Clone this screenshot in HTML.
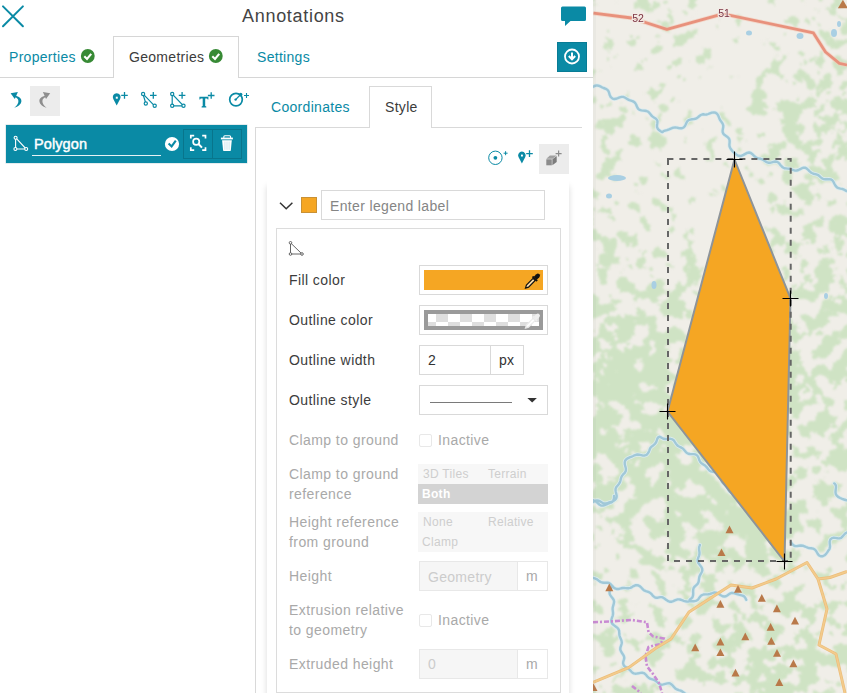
<!DOCTYPE html>
<html><head><meta charset="utf-8">
<style>
*{box-sizing:border-box;margin:0;padding:0}
html,body{width:847px;height:693px;overflow:hidden;background:#fff;font-family:"Liberation Sans",sans-serif;font-size:14px;color:#3c3c3c;letter-spacing:0.3px}
.a{position:absolute}
.teal{color:#0a8aa5}
.lbl{position:absolute;left:289px;font-size:14px;line-height:20px;color:#3c3c3c;letter-spacing:0.42px}
.dis{color:#a9a9a9}
.box{position:absolute;border:1px solid #d9d9d9;background:#fff}
.seg{font-size:12px;line-height:18px;color:#cecece;letter-spacing:0.3px}
</style></head><body>
<div id="panel" class="a" style="left:0;top:0;width:593px;height:693px;background:#fff">
  <div class="a" style="left:242px;top:5px;font-size:18px;line-height:22px;color:#444;letter-spacing:0.7px">Annotations</div>
  <!-- main tabs -->
  <div class="a" style="left:0;top:77px;width:593px;height:1px;background:#d6d6d6"></div>
  <div class="a" style="left:113px;top:36px;width:126px;height:42px;border:1px solid #d6d6d6;border-bottom:none;background:#fff"></div>
  <div class="a teal" style="left:9px;top:47px;line-height:20px">Properties</div>
  <div class="a" style="left:129px;top:47px;line-height:20px;color:#3c3c3c">Geometries</div>
  <div class="a teal" style="left:257px;top:47px;line-height:20px">Settings</div>
  <div class="a" style="left:557px;top:42px;width:30px;height:30px;background:#0a8aa5;border:1px solid #087c95"></div>
  <!-- toolbar -->
  <div class="a" style="left:30px;top:86px;width:30px;height:30px;background:#ececec"></div>
  <!-- polygon item bar -->
  <div class="a" style="left:6px;top:125px;width:241px;height:38px;background:#0a8aa5;box-shadow:0 0 0 0.5px #c9d9dd"></div>
  <div class="a" style="left:34px;top:134px;font-size:14.5px;line-height:20px;color:#fff;letter-spacing:0.1px;-webkit-text-stroke:0.45px #fff">Polygon</div>
  <div class="a" style="left:32px;top:155px;width:129px;height:1px;background:#e6f2f5"></div>
  <div class="a" style="left:183px;top:129px;width:30px;height:30px;border:1px solid #08758c"></div>
  <div class="a" style="left:212px;top:129px;width:30px;height:30px;border:1px solid #08758c"></div>

  <!-- sub panel -->
  <div class="a" style="left:255px;top:127px;width:327px;height:566px;border-left:1px solid #d9d9d9;border-top:1px solid #d9d9d9"></div>
  <div class="a" style="left:369px;top:86px;width:63px;height:42px;border:1px solid #d9d9d9;border-bottom:none;background:#fff"></div>
  <div class="a teal" style="left:271px;top:97px;line-height:20px">Coordinates</div>
  <div class="a" style="left:385px;top:97px;line-height:20px;color:#3c3c3c">Style</div>
  <div class="a" style="left:539px;top:144px;width:30px;height:30px;background:#ececec"></div>

  <!-- card -->
  <div class="a" style="left:267px;top:180px;width:302px;height:530px;background:#fff;box-shadow:0 6px 6px rgba(0,0,0,0.15)"></div>
  <div class="a" style="left:301px;top:197px;width:16px;height:16px;background:#f5a623;border:1px solid #c99135"></div>
  <div class="box" style="left:321px;top:190px;width:224px;height:30px"></div>
  <div class="a" style="left:330px;top:196px;line-height:20px;color:#858585;letter-spacing:0.35px">Enter legend label</div>
  <div class="box" style="left:276px;top:228px;width:285px;height:465px;border-color:#dcdcdc"></div>

  <div class="lbl" style="top:270px">Fill color</div>
  <div class="box" style="left:419px;top:265px;width:129px;height:30px"></div>
  <div class="a" style="left:424px;top:270px;width:119px;height:20px;background:#f5a623"></div>

  <div class="lbl" style="top:310px">Outline color</div>
  <div class="box" style="left:419px;top:305px;width:129px;height:30px"></div>
  <div class="a" style="left:424px;top:310px;width:119px;height:20px;border:4px solid #9a9a9a;background:#fff"></div>
  <div class="a" style="left:428px;top:314px;width:111px;height:8px;background:repeating-linear-gradient(90deg,#fff 0 8px,#dedede 8px 20px,#fff 20px 24px)"></div>
  <div class="a" style="left:428px;top:322px;width:111px;height:4px;background:repeating-linear-gradient(90deg,#dedede 0 8px,#fff 8px 20px,#dedede 20px 24px)"></div>

  <div class="lbl" style="top:350px">Outline width</div>
  <div class="box" style="left:419px;top:345px;width:72px;height:30px"></div>
  <div class="box" style="left:490px;top:345px;width:34px;height:30px"></div>
  <div class="a" style="left:428px;top:350px;line-height:20px;color:#333">2</div>
  <div class="a" style="left:499px;top:350px;line-height:20px;color:#333">px</div>

  <div class="lbl" style="top:390px">Outline style</div>
  <div class="box" style="left:419px;top:385px;width:129px;height:30px"></div>
  <div class="a" style="left:430px;top:402px;width:82px;height:1px;background:#7a7a7a"></div>

  <div class="lbl dis" style="top:430px">Clamp to ground</div>
  <div class="a" style="left:419px;top:434px;width:13px;height:13px;border:1px solid #e8e8e8;border-radius:2px"></div>
  <div class="a dis" style="left:438px;top:430px;line-height:20px;letter-spacing:0.4px">Inactive</div>

  <div class="lbl dis" style="top:464px">Clamp to ground<br>reference</div>
  <div class="a" style="left:418px;top:464px;width:130px;height:40px;background:#f7f7f7"></div>
  <div class="a" style="left:418px;top:484px;width:130px;height:20px;background:#d3d3d3"></div>
  <div class="a seg" style="left:423px;top:465px">3D Tiles</div>
  <div class="a seg" style="left:488px;top:465px">Terrain</div>
  <div class="a seg" style="left:422px;top:485px;color:#fff;font-weight:bold">Both</div>

  <div class="lbl dis" style="top:512px">Height reference<br>from ground</div>
  <div class="a" style="left:418px;top:512px;width:130px;height:40px;background:#f7f7f7"></div>
  <div class="a seg" style="left:423px;top:513px">None</div>
  <div class="a seg" style="left:488px;top:513px">Relative</div>
  <div class="a seg" style="left:422px;top:533px">Clamp</div>

  <div class="lbl dis" style="top:566px">Height</div>
  <div class="box" style="left:419px;top:561px;width:99px;height:30px;background:#f6f6f6;border-color:#e8e8e8"></div>
  <div class="box" style="left:517px;top:561px;width:31px;height:30px;border-color:#e8e8e8"></div>
  <div class="a" style="left:428px;top:567px;line-height:20px;color:#cccccc">Geometry</div>
  <div class="a dis" style="left:526px;top:566px;line-height:20px">m</div>

  <div class="lbl dis" style="top:600px">Extrusion relative<br>to geometry</div>
  <div class="a" style="left:419px;top:614px;width:13px;height:13px;border:1px solid #e8e8e8;border-radius:2px"></div>
  <div class="a dis" style="left:438px;top:610px;line-height:20px;letter-spacing:0.4px">Inactive</div>

  <div class="lbl dis" style="top:654px">Extruded height</div>
  <div class="box" style="left:419px;top:649px;width:99px;height:30px;background:#f6f6f6;border-color:#e8e8e8"></div>
  <div class="box" style="left:517px;top:649px;width:31px;height:30px;border-color:#e8e8e8"></div>
  <div class="a" style="left:428px;top:654px;line-height:20px;color:#cccccc">0</div>
  <div class="a dis" style="left:526px;top:654px;line-height:20px">m</div>

  <!-- ICON OVERLAY -->
  <svg class="a" style="left:0;top:0" width="593" height="693" viewBox="0 0 593 693">
    <!-- close -->
    <path d="M3 6.4L22.9 26.3M22.9 6.4L3 26.3" stroke="#0a8aa5" stroke-width="2" stroke-linecap="round" fill="none"/>
    <!-- chat -->
    <path d="M562.5 6.5H584.5Q586 6.5 586 8V19.5Q586 21 584.5 21H570.5L565 26V21H562.5Q561 21 561 19.5V8Q561 6.5 562.5 6.5Z" fill="#0a8aa5"/>
    <!-- tab checks -->
    <circle cx="87.8" cy="56" r="6.9" fill="#378a35"/><path d="M84.3 56.3L87 59L91.2 53.8" stroke="#fff" stroke-width="2.1" fill="none"/>
    <circle cx="215.8" cy="56" r="6.9" fill="#378a35"/><path d="M212.3 56.3L215 59L219.2 53.8" stroke="#fff" stroke-width="2.1" fill="none"/>
    <!-- download -->
    <circle cx="572" cy="56.5" r="7" stroke="#fff" stroke-width="1.8" fill="none"/><path d="M572 52.5V59M568.8 56L572 59.3L575.2 56" stroke="#fff" stroke-width="2" fill="none"/>
    <!-- undo -->
    <g fill="#0a8aa5"><path d="M10.6 93.3L17.9 92.1L14.8 98.9Z"/><path d="M15 95.6C19.3 96.5 21.6 98.6 21.4 101.2C21.1 104.2 18.2 106.6 14.2 107.7C16.9 105.6 18.5 103.2 18.4 100.9C18.3 98.9 16.9 97.6 14.4 97Z"/></g>
    <g fill="#8e8e8e"><path d="M50.2 93.3L42.9 92.1L46 98.9Z"/><path d="M45.8 95.6C41.5 96.5 39.2 98.6 39.4 101.2C39.7 104.2 42.6 106.6 46.6 107.7C43.9 105.6 42.3 103.2 42.4 100.9C42.5 98.9 43.9 97.6 46.4 97Z"/></g>
    <!-- point plus -->
    <path d="M116.7 105.5L113.3 99A3.9 3.9 0 1 1 120.1 99Z" fill="#0a8aa5"/><rect x="115.8" y="96.7" width="2" height="2" fill="#fff"/>
    <path d="M121.2 95.4H127.8M124.5 92.1V98.7" stroke="#0a8aa5" stroke-width="1.3"/>
    <!-- line plus -->
    <g stroke="#0a8aa5" stroke-width="1.2" fill="#fff">
      <path d="M143.4 95.5L145.4 102M144.2 95.2L153.6 104.8" fill="none"/>
      <circle cx="143.1" cy="94" r="1.6"/><circle cx="145.8" cy="103.5" r="1.6"/><circle cx="154.7" cy="105.8" r="1.6"/>
    </g>
    <path d="M150 95.4H156.6M153.3 92.1V98.7" stroke="#0a8aa5" stroke-width="1.3"/>
    <!-- polygon plus -->
    <g stroke="#0a8aa5" stroke-width="1.2" fill="#fff">
      <path d="M172.2 94V105.8H183.5Z" fill="none"/>
      <circle cx="172.2" cy="94" r="1.6"/><circle cx="172.2" cy="105.8" r="1.6"/><circle cx="183.5" cy="105.8" r="1.6"/>
    </g>
    <path d="M178.8 95.4H185.4M182.1 92.1V98.7" stroke="#0a8aa5" stroke-width="1.3"/>
    <!-- T plus -->
    <path d="M199.4 96.8H208.4V99.6H207.7L207.1 98.6H205.2V106.1L206.3 106.5V107.4H201.6V106.5L202.7 106.1V98.6H200.7L200.1 99.6H199.4Z" fill="#0a8aa5"/>
    <path d="M207.9 95.5H214.5M211.2 92.2V98.8" stroke="#0a8aa5" stroke-width="1.3"/>
    <!-- circle plus -->
    <circle cx="236" cy="99.6" r="6.3" fill="none" stroke="#0a8aa5" stroke-width="1.7"/>
    <path d="M235.6 99.6L240.7 94.5" stroke="#0a8aa5" stroke-width="1.3"/><circle cx="235.6" cy="99.6" r="1.2" fill="#0a8aa5"/><circle cx="240.7" cy="94.5" r="1.7" fill="#0a8aa5"/>
    <path d="M244 95.5H249M246.5 93V98" stroke="#0a8aa5" stroke-width="1.1"/>
    <!-- bar polygon icon -->
    <g stroke="#fff" stroke-width="1.1" fill="#0a8aa5">
      <path d="M15.6 137.7V149H26.2Z" fill="none"/>
      <circle cx="15.6" cy="137.7" r="1.5"/><circle cx="15.4" cy="149" r="1.5"/><circle cx="26.2" cy="149" r="1.5"/>
    </g>
    <!-- bar check -->
    <circle cx="172" cy="144" r="7.1" fill="#fff"/><path d="M168.6 143.6L171.6 146.4L175.8 140.6" stroke="#0a8aa5" stroke-width="2.1" fill="none"/>
    <!-- zoom -->
    <path d="M190.8 138.6V135.7H194.2M202.2 135.7H205.5V138.6M205.5 147.2V150.1H202.2M194.2 150.1H190.8V147.2" stroke="#fff" stroke-width="1.7" fill="none"/>
    <circle cx="196.2" cy="141.8" r="3.1" stroke="#fff" stroke-width="1.7" fill="none"/><path d="M198.4 144L202 147.6" stroke="#fff" stroke-width="2"/>
    <!-- trash -->
    <path d="M223.8 138.2V136.8Q223.8 135.8 224.8 135.8H229.6Q230.6 135.8 230.6 136.8V138.2" stroke="#fff" stroke-width="1.1" fill="none"/>
    <rect x="220.9" y="137.6" width="12" height="1.8" fill="#fff"/>
    <path d="M222.1 140.3H231.8L230.8 150.6Q230.7 151 230.2 151H223.7Q223.2 151 223.1 150.6Z" fill="#fff"/>
    <path d="M224.9 141.5V149.8M227 141.5V149.8M229.1 141.5V149.8" stroke="#b9dde6" stroke-width="0.7"/>
    <!-- style icons -->
    <circle cx="495.4" cy="157.8" r="6.7" fill="none" stroke="#0a8aa5" stroke-width="1"/><circle cx="495.4" cy="157.8" r="1.9" fill="#0a8aa5"/>
    <path d="M503.6 153.2H507.6M505.6 151.2V155.2" stroke="#0a8aa5" stroke-width="1"/>
    <path d="M521.9 163.4L518.5 157.1A3.8 3.8 0 1 1 525.3 157.1Z" fill="#0a8aa5"/><rect x="521" y="154.6" width="1.9" height="1.9" fill="#fff"/>
    <path d="M526.2 153.6H532.8M529.5 150.3V156.9" stroke="#0a8aa5" stroke-width="1.3"/>
    <g fill="#8c8c8c">
      <path d="M546.3 159.3H551.8V165.3H546.3Z"/>
      <path d="M546.3 158.7L549.9 155.4H556.6L552.6 158.7Z" fill="#a0a0a0"/>
      <path d="M552.4 159.3L556.7 155.9V162L552.4 165.3Z" fill="#7c7c7c"/>
    </g>
    <path d="M555.6 153.6H561.6M558.6 150.6V156.6" stroke="#8c8c8c" stroke-width="1.2"/>
    <!-- chevron -->
    <path d="M280 202.7L286.2 208.7L292.4 202.7" stroke="#333" stroke-width="1.5" fill="none"/>
    <!-- small polygon icon -->
    <g stroke="#555" stroke-width="0.9" fill="#fff">
      <path d="M290.5 242.8V254H302Z" fill="none"/>
      <circle cx="290.5" cy="242.8" r="1.3"/><circle cx="290.5" cy="254" r="1.3"/><circle cx="302" cy="254" r="1.3"/>
    </g>
    <!-- eyedropper -->
    <g transform="translate(532.3,281.3) rotate(45)">
      <path d="M-2.1 -4.2V-7.8Q-2.1 -10 0 -10Q2.1 -10 2.1 -7.8V-4.2Z" fill="#111"/>
      <rect x="-3.3" y="-4.6" width="6.6" height="2" rx="0.6" fill="#111"/>
      <path d="M-1.5 -2.6V6.8L0 9.6L1.5 6.8V-2.6Z" fill="#f9dcaa" stroke="#111" stroke-width="1.2"/>
    </g>
    <g transform="translate(532.3,321.3) rotate(45)" opacity="0.95">
      <path d="M-2.1 -4.2V-7.8Q-2.1 -10 0 -10Q2.1 -10 2.1 -7.8V-4.2Z" fill="#f0f0f0"/>
      <rect x="-3.3" y="-4.6" width="6.6" height="2" rx="0.6" fill="#f0f0f0"/>
      <path d="M-1.5 -2.6V6.8L0 9.6L1.5 6.8V-2.6Z" fill="#fff" stroke="#ececec" stroke-width="1.2"/>
    </g>
    <!-- select caret -->
    <path d="M527.4 397.9H536.9L532.15 402.6Z" fill="#333"/>
  </svg>
</div>

<!-- MAP -->
<svg class="a" style="left:593px;top:0" width="254" height="693" viewBox="593 0 254 693">
<defs>
<filter id="tex" x="560" y="-40" width="330" height="780" filterUnits="userSpaceOnUse" color-interpolation-filters="sRGB">
  <feGaussianBlur in="SourceGraphic" stdDeviation="12" result="d"/>
  <feTurbulence type="fractalNoise" baseFrequency="0.06" numOctaves="4" seed="7" result="n"/>
  <feColorMatrix in="n" type="matrix" values="0 0 0 0 0  0 0 0 0 0  0 0 0 0 0  1 0 0 0 0" result="na"/>
  <feComposite in="d" in2="na" operator="arithmetic" k1="0" k2="2.4" k3="3" k4="-2.75" result="s"/>
  <feComponentTransfer in="s" result="t"><feFuncA type="linear" slope="12" intercept="-0.5"/></feComponentTransfer>
  <feFlood flood-color="#cfe3c4" result="c"/>
  <feComposite in="c" in2="t" operator="in" result="g"/>
  <feGaussianBlur in="g" stdDeviation="0.9"/>
</filter>
<filter id="wig" x="560" y="-40" width="330" height="780" filterUnits="userSpaceOnUse">
  <feTurbulence type="fractalNoise" baseFrequency="0.045" numOctaves="2" seed="5" result="w"/>
  <feDisplacementMap in="SourceGraphic" in2="w" scale="14" xChannelSelector="R" yChannelSelector="G" result="dm"/>
  <feGaussianBlur in="dm" stdDeviation="0.5"/>
</filter>
<filter id="soft" x="560" y="-40" width="330" height="780" filterUnits="userSpaceOnUse"><feGaussianBlur stdDeviation="0.55"/></filter>
</defs>
<g filter="url(#soft)">
<rect x="593" y="0" width="254" height="693" fill="#f0eee8"/>
<g filter="url(#tex)">
<rect x="561" y="-32" width="33" height="33" fill-opacity="0.35"/>
<rect x="593" y="-32" width="33" height="33" fill-opacity="0.35"/>
<rect x="625" y="-32" width="33" height="33" fill-opacity="0.38"/>
<rect x="657" y="-32" width="33" height="33" fill-opacity="0.48"/>
<rect x="689" y="-32" width="33" height="33" fill-opacity="0.3"/>
<rect x="721" y="-32" width="33" height="33" fill-opacity="0.3"/>
<rect x="753" y="-32" width="33" height="33" fill-opacity="0.32"/>
<rect x="785" y="-32" width="33" height="33" fill-opacity="0.42"/>
<rect x="817" y="-32" width="33" height="33" fill-opacity="0.5"/>
<rect x="849" y="-32" width="33" height="33" fill-opacity="0.5"/>
<rect x="561" y="0" width="33" height="33" fill-opacity="0.35"/>
<rect x="593" y="0" width="33" height="33" fill-opacity="0.35"/>
<rect x="625" y="0" width="33" height="33" fill-opacity="0.38"/>
<rect x="657" y="0" width="33" height="33" fill-opacity="0.48"/>
<rect x="689" y="0" width="33" height="33" fill-opacity="0.3"/>
<rect x="721" y="0" width="33" height="33" fill-opacity="0.3"/>
<rect x="753" y="0" width="33" height="33" fill-opacity="0.32"/>
<rect x="785" y="0" width="33" height="33" fill-opacity="0.42"/>
<rect x="817" y="0" width="33" height="33" fill-opacity="0.5"/>
<rect x="849" y="0" width="33" height="33" fill-opacity="0.5"/>
<rect x="561" y="32" width="33" height="33" fill-opacity="0.3"/>
<rect x="593" y="32" width="33" height="33" fill-opacity="0.3"/>
<rect x="625" y="32" width="33" height="33" fill-opacity="0.35"/>
<rect x="657" y="32" width="33" height="33" fill-opacity="0.42"/>
<rect x="689" y="32" width="33" height="33" fill-opacity="0.42"/>
<rect x="721" y="32" width="33" height="33" fill-opacity="0.28"/>
<rect x="753" y="32" width="33" height="33" fill-opacity="0.33"/>
<rect x="785" y="32" width="33" height="33" fill-opacity="0.38"/>
<rect x="817" y="32" width="33" height="33" fill-opacity="0.45"/>
<rect x="849" y="32" width="33" height="33" fill-opacity="0.45"/>
<rect x="561" y="64" width="33" height="33" fill-opacity="0.33"/>
<rect x="593" y="64" width="33" height="33" fill-opacity="0.33"/>
<rect x="625" y="64" width="33" height="33" fill-opacity="0.28"/>
<rect x="657" y="64" width="33" height="33" fill-opacity="0.4"/>
<rect x="689" y="64" width="33" height="33" fill-opacity="0.28"/>
<rect x="721" y="64" width="33" height="33" fill-opacity="0.22"/>
<rect x="753" y="64" width="33" height="33" fill-opacity="0.42"/>
<rect x="785" y="64" width="33" height="33" fill-opacity="0.5"/>
<rect x="817" y="64" width="33" height="33" fill-opacity="0.52"/>
<rect x="849" y="64" width="33" height="33" fill-opacity="0.52"/>
<rect x="561" y="96" width="33" height="33" fill-opacity="0.42"/>
<rect x="593" y="96" width="33" height="33" fill-opacity="0.42"/>
<rect x="625" y="96" width="33" height="33" fill-opacity="0.42"/>
<rect x="657" y="96" width="33" height="33" fill-opacity="0.36"/>
<rect x="689" y="96" width="33" height="33" fill-opacity="0.28"/>
<rect x="721" y="96" width="33" height="33" fill-opacity="0.28"/>
<rect x="753" y="96" width="33" height="33" fill-opacity="0.5"/>
<rect x="785" y="96" width="33" height="33" fill-opacity="0.55"/>
<rect x="817" y="96" width="33" height="33" fill-opacity="0.55"/>
<rect x="849" y="96" width="33" height="33" fill-opacity="0.55"/>
<rect x="561" y="128" width="33" height="33" fill-opacity="0.42"/>
<rect x="593" y="128" width="33" height="33" fill-opacity="0.42"/>
<rect x="625" y="128" width="33" height="33" fill-opacity="0.42"/>
<rect x="657" y="128" width="33" height="33" fill-opacity="0.28"/>
<rect x="689" y="128" width="33" height="33" fill-opacity="0.3"/>
<rect x="721" y="128" width="33" height="33" fill-opacity="0.28"/>
<rect x="753" y="128" width="33" height="33" fill-opacity="0.5"/>
<rect x="785" y="128" width="33" height="33" fill-opacity="0.55"/>
<rect x="817" y="128" width="33" height="33" fill-opacity="0.52"/>
<rect x="849" y="128" width="33" height="33" fill-opacity="0.52"/>
<rect x="561" y="160" width="33" height="33" fill-opacity="0.42"/>
<rect x="593" y="160" width="33" height="33" fill-opacity="0.42"/>
<rect x="625" y="160" width="33" height="33" fill-opacity="0.32"/>
<rect x="657" y="160" width="33" height="33" fill-opacity="0.28"/>
<rect x="689" y="160" width="33" height="33" fill-opacity="0.3"/>
<rect x="721" y="160" width="33" height="33" fill-opacity="0.3"/>
<rect x="753" y="160" width="33" height="33" fill-opacity="0.42"/>
<rect x="785" y="160" width="33" height="33" fill-opacity="0.5"/>
<rect x="817" y="160" width="33" height="33" fill-opacity="0.48"/>
<rect x="849" y="160" width="33" height="33" fill-opacity="0.48"/>
<rect x="561" y="192" width="33" height="33" fill-opacity="0.45"/>
<rect x="593" y="192" width="33" height="33" fill-opacity="0.45"/>
<rect x="625" y="192" width="33" height="33" fill-opacity="0.38"/>
<rect x="657" y="192" width="33" height="33" fill-opacity="0.32"/>
<rect x="689" y="192" width="33" height="33" fill-opacity="0.32"/>
<rect x="721" y="192" width="33" height="33" fill-opacity="0.35"/>
<rect x="753" y="192" width="33" height="33" fill-opacity="0.4"/>
<rect x="785" y="192" width="33" height="33" fill-opacity="0.45"/>
<rect x="817" y="192" width="33" height="33" fill-opacity="0.5"/>
<rect x="849" y="192" width="33" height="33" fill-opacity="0.5"/>
<rect x="561" y="224" width="33" height="33" fill-opacity="0.48"/>
<rect x="593" y="224" width="33" height="33" fill-opacity="0.48"/>
<rect x="625" y="224" width="33" height="33" fill-opacity="0.42"/>
<rect x="657" y="224" width="33" height="33" fill-opacity="0.42"/>
<rect x="689" y="224" width="33" height="33" fill-opacity="0.38"/>
<rect x="721" y="224" width="33" height="33" fill-opacity="0.4"/>
<rect x="753" y="224" width="33" height="33" fill-opacity="0.42"/>
<rect x="785" y="224" width="33" height="33" fill-opacity="0.45"/>
<rect x="817" y="224" width="33" height="33" fill-opacity="0.5"/>
<rect x="849" y="224" width="33" height="33" fill-opacity="0.5"/>
<rect x="561" y="256" width="33" height="33" fill-opacity="0.5"/>
<rect x="593" y="256" width="33" height="33" fill-opacity="0.5"/>
<rect x="625" y="256" width="33" height="33" fill-opacity="0.48"/>
<rect x="657" y="256" width="33" height="33" fill-opacity="0.45"/>
<rect x="689" y="256" width="33" height="33" fill-opacity="0.4"/>
<rect x="721" y="256" width="33" height="33" fill-opacity="0.4"/>
<rect x="753" y="256" width="33" height="33" fill-opacity="0.4"/>
<rect x="785" y="256" width="33" height="33" fill-opacity="0.5"/>
<rect x="817" y="256" width="33" height="33" fill-opacity="0.52"/>
<rect x="849" y="256" width="33" height="33" fill-opacity="0.52"/>
<rect x="561" y="288" width="33" height="33" fill-opacity="0.52"/>
<rect x="593" y="288" width="33" height="33" fill-opacity="0.52"/>
<rect x="625" y="288" width="33" height="33" fill-opacity="0.52"/>
<rect x="657" y="288" width="33" height="33" fill-opacity="0.5"/>
<rect x="689" y="288" width="33" height="33" fill-opacity="0.5"/>
<rect x="721" y="288" width="33" height="33" fill-opacity="0.5"/>
<rect x="753" y="288" width="33" height="33" fill-opacity="0.5"/>
<rect x="785" y="288" width="33" height="33" fill-opacity="0.5"/>
<rect x="817" y="288" width="33" height="33" fill-opacity="0.55"/>
<rect x="849" y="288" width="33" height="33" fill-opacity="0.55"/>
<rect x="561" y="320" width="33" height="33" fill-opacity="0.58"/>
<rect x="593" y="320" width="33" height="33" fill-opacity="0.58"/>
<rect x="625" y="320" width="33" height="33" fill-opacity="0.58"/>
<rect x="657" y="320" width="33" height="33" fill-opacity="0.62"/>
<rect x="689" y="320" width="33" height="33" fill-opacity="0.5"/>
<rect x="721" y="320" width="33" height="33" fill-opacity="0.5"/>
<rect x="753" y="320" width="33" height="33" fill-opacity="0.5"/>
<rect x="785" y="320" width="33" height="33" fill-opacity="0.52"/>
<rect x="817" y="320" width="33" height="33" fill-opacity="0.58"/>
<rect x="849" y="320" width="33" height="33" fill-opacity="0.58"/>
<rect x="561" y="352" width="33" height="33" fill-opacity="0.68"/>
<rect x="593" y="352" width="33" height="33" fill-opacity="0.68"/>
<rect x="625" y="352" width="33" height="33" fill-opacity="0.68"/>
<rect x="657" y="352" width="33" height="33" fill-opacity="0.65"/>
<rect x="689" y="352" width="33" height="33" fill-opacity="0.5"/>
<rect x="721" y="352" width="33" height="33" fill-opacity="0.5"/>
<rect x="753" y="352" width="33" height="33" fill-opacity="0.5"/>
<rect x="785" y="352" width="33" height="33" fill-opacity="0.56"/>
<rect x="817" y="352" width="33" height="33" fill-opacity="0.55"/>
<rect x="849" y="352" width="33" height="33" fill-opacity="0.55"/>
<rect x="561" y="384" width="33" height="33" fill-opacity="0.66"/>
<rect x="593" y="384" width="33" height="33" fill-opacity="0.66"/>
<rect x="625" y="384" width="33" height="33" fill-opacity="0.68"/>
<rect x="657" y="384" width="33" height="33" fill-opacity="0.64"/>
<rect x="689" y="384" width="33" height="33" fill-opacity="0.5"/>
<rect x="721" y="384" width="33" height="33" fill-opacity="0.5"/>
<rect x="753" y="384" width="33" height="33" fill-opacity="0.5"/>
<rect x="785" y="384" width="33" height="33" fill-opacity="0.55"/>
<rect x="817" y="384" width="33" height="33" fill-opacity="0.55"/>
<rect x="849" y="384" width="33" height="33" fill-opacity="0.55"/>
<rect x="561" y="416" width="33" height="33" fill-opacity="0.62"/>
<rect x="593" y="416" width="33" height="33" fill-opacity="0.62"/>
<rect x="625" y="416" width="33" height="33" fill-opacity="0.66"/>
<rect x="657" y="416" width="33" height="33" fill-opacity="0.6"/>
<rect x="689" y="416" width="33" height="33" fill-opacity="0.5"/>
<rect x="721" y="416" width="33" height="33" fill-opacity="0.5"/>
<rect x="753" y="416" width="33" height="33" fill-opacity="0.5"/>
<rect x="785" y="416" width="33" height="33" fill-opacity="0.52"/>
<rect x="817" y="416" width="33" height="33" fill-opacity="0.55"/>
<rect x="849" y="416" width="33" height="33" fill-opacity="0.55"/>
<rect x="561" y="448" width="33" height="33" fill-opacity="0.6"/>
<rect x="593" y="448" width="33" height="33" fill-opacity="0.6"/>
<rect x="625" y="448" width="33" height="33" fill-opacity="0.64"/>
<rect x="657" y="448" width="33" height="33" fill-opacity="0.66"/>
<rect x="689" y="448" width="33" height="33" fill-opacity="0.58"/>
<rect x="721" y="448" width="33" height="33" fill-opacity="0.5"/>
<rect x="753" y="448" width="33" height="33" fill-opacity="0.5"/>
<rect x="785" y="448" width="33" height="33" fill-opacity="0.5"/>
<rect x="817" y="448" width="33" height="33" fill-opacity="0.52"/>
<rect x="849" y="448" width="33" height="33" fill-opacity="0.52"/>
<rect x="561" y="480" width="33" height="33" fill-opacity="0.55"/>
<rect x="593" y="480" width="33" height="33" fill-opacity="0.55"/>
<rect x="625" y="480" width="33" height="33" fill-opacity="0.62"/>
<rect x="657" y="480" width="33" height="33" fill-opacity="0.66"/>
<rect x="689" y="480" width="33" height="33" fill-opacity="0.66"/>
<rect x="721" y="480" width="33" height="33" fill-opacity="0.62"/>
<rect x="753" y="480" width="33" height="33" fill-opacity="0.5"/>
<rect x="785" y="480" width="33" height="33" fill-opacity="0.48"/>
<rect x="817" y="480" width="33" height="33" fill-opacity="0.5"/>
<rect x="849" y="480" width="33" height="33" fill-opacity="0.5"/>
<rect x="561" y="512" width="33" height="33" fill-opacity="0.45"/>
<rect x="593" y="512" width="33" height="33" fill-opacity="0.45"/>
<rect x="625" y="512" width="33" height="33" fill-opacity="0.52"/>
<rect x="657" y="512" width="33" height="33" fill-opacity="0.64"/>
<rect x="689" y="512" width="33" height="33" fill-opacity="0.68"/>
<rect x="721" y="512" width="33" height="33" fill-opacity="0.68"/>
<rect x="753" y="512" width="33" height="33" fill-opacity="0.62"/>
<rect x="785" y="512" width="33" height="33" fill-opacity="0.5"/>
<rect x="817" y="512" width="33" height="33" fill-opacity="0.45"/>
<rect x="849" y="512" width="33" height="33" fill-opacity="0.45"/>
<rect x="561" y="544" width="33" height="33" fill-opacity="0.38"/>
<rect x="593" y="544" width="33" height="33" fill-opacity="0.38"/>
<rect x="625" y="544" width="33" height="33" fill-opacity="0.45"/>
<rect x="657" y="544" width="33" height="33" fill-opacity="0.55"/>
<rect x="689" y="544" width="33" height="33" fill-opacity="0.6"/>
<rect x="721" y="544" width="33" height="33" fill-opacity="0.6"/>
<rect x="753" y="544" width="33" height="33" fill-opacity="0.56"/>
<rect x="785" y="544" width="33" height="33" fill-opacity="0.42"/>
<rect x="817" y="544" width="33" height="33" fill-opacity="0.4"/>
<rect x="849" y="544" width="33" height="33" fill-opacity="0.4"/>
<rect x="561" y="576" width="33" height="33" fill-opacity="0.38"/>
<rect x="593" y="576" width="33" height="33" fill-opacity="0.38"/>
<rect x="625" y="576" width="33" height="33" fill-opacity="0.42"/>
<rect x="657" y="576" width="33" height="33" fill-opacity="0.42"/>
<rect x="689" y="576" width="33" height="33" fill-opacity="0.46"/>
<rect x="721" y="576" width="33" height="33" fill-opacity="0.42"/>
<rect x="753" y="576" width="33" height="33" fill-opacity="0.46"/>
<rect x="785" y="576" width="33" height="33" fill-opacity="0.4"/>
<rect x="817" y="576" width="33" height="33" fill-opacity="0.4"/>
<rect x="849" y="576" width="33" height="33" fill-opacity="0.4"/>
<rect x="561" y="608" width="33" height="33" fill-opacity="0.48"/>
<rect x="593" y="608" width="33" height="33" fill-opacity="0.48"/>
<rect x="625" y="608" width="33" height="33" fill-opacity="0.46"/>
<rect x="657" y="608" width="33" height="33" fill-opacity="0.42"/>
<rect x="689" y="608" width="33" height="33" fill-opacity="0.46"/>
<rect x="721" y="608" width="33" height="33" fill-opacity="0.5"/>
<rect x="753" y="608" width="33" height="33" fill-opacity="0.56"/>
<rect x="785" y="608" width="33" height="33" fill-opacity="0.52"/>
<rect x="817" y="608" width="33" height="33" fill-opacity="0.5"/>
<rect x="849" y="608" width="33" height="33" fill-opacity="0.5"/>
<rect x="561" y="640" width="33" height="33" fill-opacity="0.48"/>
<rect x="593" y="640" width="33" height="33" fill-opacity="0.48"/>
<rect x="625" y="640" width="33" height="33" fill-opacity="0.42"/>
<rect x="657" y="640" width="33" height="33" fill-opacity="0.46"/>
<rect x="689" y="640" width="33" height="33" fill-opacity="0.52"/>
<rect x="721" y="640" width="33" height="33" fill-opacity="0.6"/>
<rect x="753" y="640" width="33" height="33" fill-opacity="0.62"/>
<rect x="785" y="640" width="33" height="33" fill-opacity="0.58"/>
<rect x="817" y="640" width="33" height="33" fill-opacity="0.55"/>
<rect x="849" y="640" width="33" height="33" fill-opacity="0.55"/>
<rect x="561" y="672" width="33" height="33" fill-opacity="0.48"/>
<rect x="593" y="672" width="33" height="33" fill-opacity="0.48"/>
<rect x="625" y="672" width="33" height="33" fill-opacity="0.42"/>
<rect x="657" y="672" width="33" height="33" fill-opacity="0.42"/>
<rect x="689" y="672" width="33" height="33" fill-opacity="0.48"/>
<rect x="721" y="672" width="33" height="33" fill-opacity="0.56"/>
<rect x="753" y="672" width="33" height="33" fill-opacity="0.62"/>
<rect x="785" y="672" width="33" height="33" fill-opacity="0.55"/>
<rect x="817" y="672" width="33" height="33" fill-opacity="0.55"/>
<rect x="849" y="672" width="33" height="33" fill-opacity="0.55"/>
<rect x="561" y="704" width="33" height="33" fill-opacity="0.48"/>
<rect x="593" y="704" width="33" height="33" fill-opacity="0.48"/>
<rect x="625" y="704" width="33" height="33" fill-opacity="0.42"/>
<rect x="657" y="704" width="33" height="33" fill-opacity="0.42"/>
<rect x="689" y="704" width="33" height="33" fill-opacity="0.48"/>
<rect x="721" y="704" width="33" height="33" fill-opacity="0.56"/>
<rect x="753" y="704" width="33" height="33" fill-opacity="0.62"/>
<rect x="785" y="704" width="33" height="33" fill-opacity="0.55"/>
<rect x="817" y="704" width="33" height="33" fill-opacity="0.55"/>
<rect x="849" y="704" width="33" height="33" fill-opacity="0.55"/>
</g>
<g fill="#a9cfe3">
  <ellipse cx="617" cy="178" rx="9" ry="3"/><ellipse cx="609" cy="196" rx="3" ry="2.5"/>
  <ellipse cx="749" cy="33" rx="3" ry="2.5"/><ellipse cx="800" cy="36" rx="3.5" ry="3"/><ellipse cx="834" cy="33" rx="3" ry="4"/><ellipse cx="839" cy="24" rx="2" ry="3"/>
  <ellipse cx="654" cy="285" rx="2.5" ry="4"/><ellipse cx="826" cy="296" rx="2" ry="3"/>
</g>
<g fill="none" stroke-linejoin="round" stroke-linecap="round">
  <path stroke="#dcecef" stroke-width="4" d="M593.0 86.8 L594.0 86.3 L595.3 85.7 L596.8 85.4 L598.5 85.7 L600.3 86.4 L602.0 87.3 L603.6 88.0 L605.0 88.5 L606.4 89.1 L607.7 90.1 L608.6 91.4 L609.2 93.1 L609.7 95.0 L610.8 97.1 L612.6 98.6 L614.2 99.0 L615.9 98.8 L617.8 98.2 L619.7 97.4 L621.5 96.9 L623.2 96.9 L624.8 97.5 L626.4 98.5 L627.9 99.4 L629.4 100.1 L631.0 100.6 L632.5 101.1 L634.0 101.9 L635.2 103.0 L636.1 104.5 L636.8 106.2 L637.5 107.8 L638.4 109.1 L639.7 109.9 L641.4 110.4 L643.2 110.6 L645.0 110.7 L646.5 111.0 L648.0 111.6 L649.2 112.7 L650.3 114.1 L651.4 115.5 L652.7 116.6 L653.9 117.5 L655.2 118.2 L656.3 119.1 L657.2 120.3 L657.5 121.7 L657.3 123.4 L657.0 125.3 L657.0 127.1 L657.8 128.8 L659.3 130.3 L661.0 131.5 L662.3 132.1 L662.8 131.9 L663.0 131.5 L663.5 131.2 L665.0 130.7 L667.0 130.2 L669.0 129.4 L670.8 128.6 L672.2 128.0 L673.6 127.6 L675.2 127.4 L676.8 127.6 L678.5 128.0 L680.3 128.3 L682.0 128.3 L683.6 127.5 L684.8 126.2 L685.7 124.5 L686.5 122.7 L687.4 121.2 L688.6 120.1 L690.2 119.6 L692.0 119.3 L693.7 119.1 L695.3 118.8 L696.9 118.1 L698.3 117.0 L699.5 115.9 L700.8 115.0 L702.1 114.5 L703.4 114.3 L704.5 114.5 L705.7 114.6 L706.9 114.5 L708.2 114.0 L709.8 113.3 L711.8 112.6 L713.9 112.4 L715.6 112.7 L717.0 113.7 L718.0 115.1 L718.8 116.9 L719.4 118.7 L720.3 120.3 L721.2 121.6 L722.2 122.9 L722.9 124.2 L723.3 125.7 L723.2 127.3 L722.9 128.9 L722.6 130.6 L722.7 132.2 L723.4 133.8 L724.7 135.1 L726.4 136.2 L728.0 137.4 L729.1 138.8 L729.6 140.5 L729.6 142.4 L729.4 144.4 L729.5 146.2 L730.0 147.7 L731.0 149.3 L732.1 150.7 L733.2 151.9 L734.6 153.1 L736.3 154.5 L737.5 155.3 L738.8 155.8 L740.3 156.0 L741.8 155.7 L743.5 154.9 L745.3 153.9 L747.1 152.9 L749.0 152.5 L750.8 153.0 L752.5 154.2 L753.6 155.4 L754.8 156.5 L756.1 157.5 L757.5 158.1 L759.1 158.5 L760.7 158.8 L762.3 159.4 L763.8 160.2 L765.2 161.2 L766.7 162.1 L768.2 162.7 L769.9 162.7 L771.6 162.4 L773.4 161.9 L775.2 161.5 L776.8 161.7 L778.2 162.5 L779.4 163.7 L780.6 165.2 L781.8 166.5 L783.0 167.5 L784.4 168.2 L785.9 168.4 L787.5 168.6 L789.1 168.7 L790.7 169.2 L792.1 169.7 L793.6 170.2 L795.1 170.6 L796.7 170.5 L798.4 170.0 L800.2 169.1 L802.0 168.2 L803.7 167.7 L805.4 167.8 L806.8 168.6 L808.2 169.8 L809.4 171.1 L810.6 172.2 L811.8 173.0 L813.3 173.7 L814.8 174.0 L816.3 174.4 L817.7 174.9 L818.9 175.6 L820.0 176.6 L821.1 177.6 L822.3 178.5 L823.7 179.1 L825.4 179.3 L827.4 179.2 L829.1 179.1 L830.8 179.4 L832.3 180.3 L833.5 181.9 L834.5 184.0 L835.6 185.9 L837.0 187.4 L838.6 188.2 L840.4 188.6 L842.0 188.9 L843.5 189.4 L844.7 190.0 L845.7 190.6 L846.5 191.1 M593.0 502.0 L594.0 501.4 L595.4 500.8 L597.0 500.5 L598.5 500.6 L600.0 501.3 L601.5 502.3 L603.1 503.1 L604.8 503.5 L606.4 503.4 L607.9 503.0 L609.3 502.5 L611.0 502.0 L612.1 501.5 L613.4 500.9 L614.7 500.1 L615.8 499.0 L616.5 497.6 L616.7 495.9 L616.3 494.0 L615.8 492.0 L615.5 490.0 L615.7 488.3 L616.6 486.7 L617.9 485.2 L619.1 483.7 L620.0 482.2 L620.5 480.5 L620.8 478.9 L621.3 477.3 L622.0 475.9 L622.9 474.7 L623.9 473.7 L624.8 472.8 L625.8 470.9 L625.9 468.8 L625.4 466.6 L624.8 464.5 L624.7 462.6 L625.0 461.0 L625.9 459.7 L627.1 458.6 L628.6 457.9 L630.2 457.2 L631.7 456.6 L633.1 456.0 L634.5 455.3 L636.0 454.8 L637.6 454.5 L639.4 454.7 L641.2 455.1 L643.1 455.6 L644.8 455.5 L646.5 454.8 L647.8 453.5 L648.8 451.9 L649.4 450.3 L649.9 448.8 L650.6 447.6 L651.9 446.4 L653.5 445.2 L655.0 443.8 L656.1 442.3 L656.7 440.6 L657.2 439.1 L657.8 437.9 L658.5 437.1 L659.3 436.8 L660.3 436.9 L661.1 437.4 L662.0 438.0 L663.3 438.7 L665.3 439.0 L667.8 438.9 L670.3 438.8 L672.5 439.4 L673.4 440.0 L674.3 441.1 L675.1 442.4 L676.0 443.7 L677.0 445.0 L678.1 446.0 L679.5 446.7 L680.9 447.4 L682.3 448.2 L683.5 449.2 L684.6 450.5 L685.7 451.8 L686.9 453.0 L688.3 453.7 L690.0 454.0 L692.0 454.1 L693.7 454.1 L695.3 454.4 L696.6 455.0 L697.6 456.0 L698.4 457.4 L699.0 459.0 L699.5 460.5 L700.3 461.9 L701.2 463.0 L702.4 463.9 L703.8 464.7 L705.1 465.6 L706.2 466.6 L707.3 467.9 L708.3 469.3 L709.4 470.5 L711.0 471.4 L713.1 471.9 L714.8 472.1 L716.6 472.4 L718.2 473.0 L719.5 474.0 L720.3 475.6 L720.8 477.6 L721.2 479.6 L721.8 481.5 L722.9 483.0 L724.2 484.2 L725.6 485.5 L726.8 486.9 L727.7 488.5 L728.6 490.1 L729.6 491.5 L731.0 492.5 L732.8 493.1 L734.6 493.6 L736.3 494.0 L737.6 494.7 L738.6 495.6 L739.1 496.8 L739.5 498.0 L739.7 499.1 L739.9 500.1 M592.5 577.8 L593.5 578.0 L594.7 578.3 L596.0 578.8 L597.4 579.6 L598.8 580.7 L600.3 581.8 L602.0 582.5 L603.9 582.7 L605.9 582.7 L607.6 582.6 L608.9 582.9 L610.1 583.7 L611.2 584.8 L612.4 586.1 L613.6 587.4 L615.0 588.4 L616.5 589.0 L618.0 589.0 L619.6 588.7 L621.2 588.3 L622.9 588.0 L624.3 588.0 L625.7 588.1 L627.2 588.2 L628.8 588.2 L630.4 587.8 L632.0 587.1 L633.6 586.1 L635.3 585.3 L636.9 585.1 L638.5 585.5 L640.0 586.4 L641.4 587.7 L642.5 588.9 L643.5 589.9 L644.7 590.7 L645.9 591.2 L647.4 591.6 L649.0 592.2 L650.4 593.0 L651.5 594.1 L652.5 595.3 L653.6 596.4 L654.8 597.3 L656.3 597.8 L657.9 597.7 L659.1 597.4 L660.4 597.1 L661.8 597.1 L663.2 597.7 L664.8 598.7 L666.5 600.1 L668.3 601.2 L670.1 601.8 L671.7 601.7 L673.3 601.1 L674.8 600.4 L676.2 599.8 L677.6 599.4 L678.8 599.4 L679.9 599.5 L682.0 600.2 L683.8 600.8 L685.5 601.3 L687.0 601.6 L688.0 601.6 L688.8 601.3 L689.4 601.3 L690.6 601.3 L692.3 601.3 L694.3 601.2 L696.1 600.8 L697.6 600.0 L698.7 598.7 L699.7 597.2 L700.9 595.8 L702.2 595.0 L703.5 594.5 L705.1 594.4 L706.6 594.4 L708.2 594.3 L709.8 594.0 L711.4 593.5 L712.9 592.9 L714.5 592.5 L716.0 592.6 L717.5 593.2 L719.0 594.1 L720.8 595.3 L722.6 596.2 L724.3 596.5 L725.9 596.2 L727.2 595.4 L728.6 594.4 L729.9 593.6 L731.2 593.0 L732.6 592.9 L734.0 593.1 L735.5 593.6 L737.0 594.2 L738.8 594.7 L740.7 595.1 L742.6 595.6 L744.1 596.4 L745.1 597.5 L745.7 598.7 L746.2 599.8 M699.9 545.0 L699.6 545.9 L699.2 546.9 L699.1 548.2 L699.1 549.6 L699.3 551.1 L699.5 552.7 L699.4 554.4 L698.9 556.1 L698.2 557.9 L697.7 559.6 L697.7 561.3 L698.4 563.0 L699.4 564.4 L700.5 565.9 L701.6 567.4 L702.2 569.0 L702.3 570.6 L701.7 572.2 L700.9 573.7 L700.0 575.3 L699.4 576.8 L699.1 578.4 L698.9 579.9 L698.7 581.3 L698.3 582.7 L697.6 583.9 L696.3 585.2 L694.9 586.4 L693.7 587.8 L693.2 589.5 L693.1 591.5 L693.2 593.7 L693.0 595.7 L692.5 597.2 L691.6 598.3 L690.6 599.0 L689.7 599.5 M611.6 586.9 L611.3 587.8 L610.8 588.8 L610.3 590.0 L609.7 591.2 L609.5 592.6 L609.7 594.0 L610.4 595.4 L611.6 597.0 L612.8 598.5 L613.8 600.1 L614.1 601.8 L613.8 603.6 L613.3 605.4 L612.8 607.2 L612.6 609.0 L612.8 610.8 L613.0 612.4 L613.0 614.1 L612.7 615.8 L612.1 617.4 L611.6 619.0 L611.3 620.5 L611.5 622.4 L612.5 624.0 L614.1 625.4 L615.9 626.7 L617.5 627.9 L618.5 629.2 L619.1 630.7 L619.2 632.3 L619.3 634.0 L619.5 635.5 L619.9 637.0 L620.5 638.3 L621.1 639.7 L621.6 641.1 L621.8 642.5 L621.6 644.0 L621.0 645.9 L620.4 647.7 L620.3 649.5 L620.9 651.2 L622.0 653.0 L623.2 654.8 L624.0 656.4 L624.3 657.9 L624.0 659.3 L623.6 660.7 L623.2 662.0 L623.1 663.4 L623.6 665.0 L624.5 666.2 L625.7 667.1 L627.1 667.9 L628.4 668.8 L629.7 669.9 L631.0 671.2 L632.2 672.5 L633.7 673.4 L635.1 673.7 L636.7 673.6 L638.5 673.3 L640.4 672.9 L642.2 672.8 L643.8 673.1 L645.1 674.0 L646.3 675.2 L647.4 676.6 L648.6 677.7 L650.1 678.6 L651.6 679.1 L653.2 679.6 L654.6 680.2 L655.9 681.1 L657.2 682.2 L658.5 683.4 L660.0 684.3 L661.6 684.7 L663.4 684.4 L665.4 683.9 L667.3 683.4 L669.0 683.2 L670.5 683.7 L671.8 684.7 L673.0 685.9 L674.1 687.2 L675.5 688.6 L677.1 689.5 L678.8 690.1 L680.6 690.6 L682.2 691.4 L683.6 692.4 L684.9 693.4 L686.1 694.2 L687.3 694.6 L688.5 694.8 L689.4 694.7 M790.9 542.2 L791.6 543.2 L792.5 544.4 L793.6 545.4 L795.1 546.1 L796.9 546.1 L798.9 545.8 L800.9 545.5 L802.8 545.7 L804.5 546.3 L806.1 547.0 L807.6 547.6 L809.0 548.0 L811.1 548.2 L813.1 548.6 L814.8 549.5 L816.0 550.8 L817.0 552.5 L817.9 554.1 L819.1 555.5 L820.7 556.3 L822.7 556.3 L824.6 555.3 L826.1 553.9 L827.2 552.4 L828.0 551.1 L828.8 550.1 L829.3 549.4 L829.7 548.3 L830.0 546.8 L829.9 545.1 L829.7 543.3 L829.7 541.3 L830.4 539.4 L832.0 538.1 L833.7 537.7 L835.6 537.9 L837.6 538.3 L839.5 538.4 L841.1 537.8 L842.5 536.5 L843.8 535.0 L844.9 533.8 L846.0 533.0 L846.8 532.5 M834.3 483.4 L835.2 484.2 L835.9 485.6 L836.0 487.5 L835.7 489.7 L835.5 492.1 L835.8 494.1 L836.8 495.7 L838.1 496.9 L840.2 498.0 L842.2 498.8 L844.1 499.5 L845.6 500.0 L846.7 500.2 M592.9 500.2 L593.9 500.5 L595.0 501.0 L596.4 501.8 L597.8 503.1 L599.3 504.5 L601.0 505.5 L603.0 505.6 L605.1 505.0 L607.2 504.1 L608.8 503.3 L610.0 502.8 L610.4 502.7 L611.2 502.5 L612.2 501.9 L613.3 500.5 L613.9 498.7 L614.0 497.1 L614.0 496.0"/>
  <path stroke="#a0c8d8" stroke-width="2.4" d="M593.0 86.8 L594.0 86.3 L595.3 85.7 L596.8 85.4 L598.5 85.7 L600.3 86.4 L602.0 87.3 L603.6 88.0 L605.0 88.5 L606.4 89.1 L607.7 90.1 L608.6 91.4 L609.2 93.1 L609.7 95.0 L610.8 97.1 L612.6 98.6 L614.2 99.0 L615.9 98.8 L617.8 98.2 L619.7 97.4 L621.5 96.9 L623.2 96.9 L624.8 97.5 L626.4 98.5 L627.9 99.4 L629.4 100.1 L631.0 100.6 L632.5 101.1 L634.0 101.9 L635.2 103.0 L636.1 104.5 L636.8 106.2 L637.5 107.8 L638.4 109.1 L639.7 109.9 L641.4 110.4 L643.2 110.6 L645.0 110.7 L646.5 111.0 L648.0 111.6 L649.2 112.7 L650.3 114.1 L651.4 115.5 L652.7 116.6 L653.9 117.5 L655.2 118.2 L656.3 119.1 L657.2 120.3 L657.5 121.7 L657.3 123.4 L657.0 125.3 L657.0 127.1 L657.8 128.8 L659.3 130.3 L661.0 131.5 L662.3 132.1 L662.8 131.9 L663.0 131.5 L663.5 131.2 L665.0 130.7 L667.0 130.2 L669.0 129.4 L670.8 128.6 L672.2 128.0 L673.6 127.6 L675.2 127.4 L676.8 127.6 L678.5 128.0 L680.3 128.3 L682.0 128.3 L683.6 127.5 L684.8 126.2 L685.7 124.5 L686.5 122.7 L687.4 121.2 L688.6 120.1 L690.2 119.6 L692.0 119.3 L693.7 119.1 L695.3 118.8 L696.9 118.1 L698.3 117.0 L699.5 115.9 L700.8 115.0 L702.1 114.5 L703.4 114.3 L704.5 114.5 L705.7 114.6 L706.9 114.5 L708.2 114.0 L709.8 113.3 L711.8 112.6 L713.9 112.4 L715.6 112.7 L717.0 113.7 L718.0 115.1 L718.8 116.9 L719.4 118.7 L720.3 120.3 L721.2 121.6 L722.2 122.9 L722.9 124.2 L723.3 125.7 L723.2 127.3 L722.9 128.9 L722.6 130.6 L722.7 132.2 L723.4 133.8 L724.7 135.1 L726.4 136.2 L728.0 137.4 L729.1 138.8 L729.6 140.5 L729.6 142.4 L729.4 144.4 L729.5 146.2 L730.0 147.7 L731.0 149.3 L732.1 150.7 L733.2 151.9 L734.6 153.1 L736.3 154.5 L737.5 155.3 L738.8 155.8 L740.3 156.0 L741.8 155.7 L743.5 154.9 L745.3 153.9 L747.1 152.9 L749.0 152.5 L750.8 153.0 L752.5 154.2 L753.6 155.4 L754.8 156.5 L756.1 157.5 L757.5 158.1 L759.1 158.5 L760.7 158.8 L762.3 159.4 L763.8 160.2 L765.2 161.2 L766.7 162.1 L768.2 162.7 L769.9 162.7 L771.6 162.4 L773.4 161.9 L775.2 161.5 L776.8 161.7 L778.2 162.5 L779.4 163.7 L780.6 165.2 L781.8 166.5 L783.0 167.5 L784.4 168.2 L785.9 168.4 L787.5 168.6 L789.1 168.7 L790.7 169.2 L792.1 169.7 L793.6 170.2 L795.1 170.6 L796.7 170.5 L798.4 170.0 L800.2 169.1 L802.0 168.2 L803.7 167.7 L805.4 167.8 L806.8 168.6 L808.2 169.8 L809.4 171.1 L810.6 172.2 L811.8 173.0 L813.3 173.7 L814.8 174.0 L816.3 174.4 L817.7 174.9 L818.9 175.6 L820.0 176.6 L821.1 177.6 L822.3 178.5 L823.7 179.1 L825.4 179.3 L827.4 179.2 L829.1 179.1 L830.8 179.4 L832.3 180.3 L833.5 181.9 L834.5 184.0 L835.6 185.9 L837.0 187.4 L838.6 188.2 L840.4 188.6 L842.0 188.9 L843.5 189.4 L844.7 190.0 L845.7 190.6 L846.5 191.1 M593.0 502.0 L594.0 501.4 L595.4 500.8 L597.0 500.5 L598.5 500.6 L600.0 501.3 L601.5 502.3 L603.1 503.1 L604.8 503.5 L606.4 503.4 L607.9 503.0 L609.3 502.5 L611.0 502.0 L612.1 501.5 L613.4 500.9 L614.7 500.1 L615.8 499.0 L616.5 497.6 L616.7 495.9 L616.3 494.0 L615.8 492.0 L615.5 490.0 L615.7 488.3 L616.6 486.7 L617.9 485.2 L619.1 483.7 L620.0 482.2 L620.5 480.5 L620.8 478.9 L621.3 477.3 L622.0 475.9 L622.9 474.7 L623.9 473.7 L624.8 472.8 L625.8 470.9 L625.9 468.8 L625.4 466.6 L624.8 464.5 L624.7 462.6 L625.0 461.0 L625.9 459.7 L627.1 458.6 L628.6 457.9 L630.2 457.2 L631.7 456.6 L633.1 456.0 L634.5 455.3 L636.0 454.8 L637.6 454.5 L639.4 454.7 L641.2 455.1 L643.1 455.6 L644.8 455.5 L646.5 454.8 L647.8 453.5 L648.8 451.9 L649.4 450.3 L649.9 448.8 L650.6 447.6 L651.9 446.4 L653.5 445.2 L655.0 443.8 L656.1 442.3 L656.7 440.6 L657.2 439.1 L657.8 437.9 L658.5 437.1 L659.3 436.8 L660.3 436.9 L661.1 437.4 L662.0 438.0 L663.3 438.7 L665.3 439.0 L667.8 438.9 L670.3 438.8 L672.5 439.4 L673.4 440.0 L674.3 441.1 L675.1 442.4 L676.0 443.7 L677.0 445.0 L678.1 446.0 L679.5 446.7 L680.9 447.4 L682.3 448.2 L683.5 449.2 L684.6 450.5 L685.7 451.8 L686.9 453.0 L688.3 453.7 L690.0 454.0 L692.0 454.1 L693.7 454.1 L695.3 454.4 L696.6 455.0 L697.6 456.0 L698.4 457.4 L699.0 459.0 L699.5 460.5 L700.3 461.9 L701.2 463.0 L702.4 463.9 L703.8 464.7 L705.1 465.6 L706.2 466.6 L707.3 467.9 L708.3 469.3 L709.4 470.5 L711.0 471.4 L713.1 471.9 L714.8 472.1 L716.6 472.4 L718.2 473.0 L719.5 474.0 L720.3 475.6 L720.8 477.6 L721.2 479.6 L721.8 481.5 L722.9 483.0 L724.2 484.2 L725.6 485.5 L726.8 486.9 L727.7 488.5 L728.6 490.1 L729.6 491.5 L731.0 492.5 L732.8 493.1 L734.6 493.6 L736.3 494.0 L737.6 494.7 L738.6 495.6 L739.1 496.8 L739.5 498.0 L739.7 499.1 L739.9 500.1 M592.5 577.8 L593.5 578.0 L594.7 578.3 L596.0 578.8 L597.4 579.6 L598.8 580.7 L600.3 581.8 L602.0 582.5 L603.9 582.7 L605.9 582.7 L607.6 582.6 L608.9 582.9 L610.1 583.7 L611.2 584.8 L612.4 586.1 L613.6 587.4 L615.0 588.4 L616.5 589.0 L618.0 589.0 L619.6 588.7 L621.2 588.3 L622.9 588.0 L624.3 588.0 L625.7 588.1 L627.2 588.2 L628.8 588.2 L630.4 587.8 L632.0 587.1 L633.6 586.1 L635.3 585.3 L636.9 585.1 L638.5 585.5 L640.0 586.4 L641.4 587.7 L642.5 588.9 L643.5 589.9 L644.7 590.7 L645.9 591.2 L647.4 591.6 L649.0 592.2 L650.4 593.0 L651.5 594.1 L652.5 595.3 L653.6 596.4 L654.8 597.3 L656.3 597.8 L657.9 597.7 L659.1 597.4 L660.4 597.1 L661.8 597.1 L663.2 597.7 L664.8 598.7 L666.5 600.1 L668.3 601.2 L670.1 601.8 L671.7 601.7 L673.3 601.1 L674.8 600.4 L676.2 599.8 L677.6 599.4 L678.8 599.4 L679.9 599.5 L682.0 600.2 L683.8 600.8 L685.5 601.3 L687.0 601.6 L688.0 601.6 L688.8 601.3 L689.4 601.3 L690.6 601.3 L692.3 601.3 L694.3 601.2 L696.1 600.8 L697.6 600.0 L698.7 598.7 L699.7 597.2 L700.9 595.8 L702.2 595.0 L703.5 594.5 L705.1 594.4 L706.6 594.4 L708.2 594.3 L709.8 594.0 L711.4 593.5 L712.9 592.9 L714.5 592.5 L716.0 592.6 L717.5 593.2 L719.0 594.1 L720.8 595.3 L722.6 596.2 L724.3 596.5 L725.9 596.2 L727.2 595.4 L728.6 594.4 L729.9 593.6 L731.2 593.0 L732.6 592.9 L734.0 593.1 L735.5 593.6 L737.0 594.2 L738.8 594.7 L740.7 595.1 L742.6 595.6 L744.1 596.4 L745.1 597.5 L745.7 598.7 L746.2 599.8 M699.9 545.0 L699.6 545.9 L699.2 546.9 L699.1 548.2 L699.1 549.6 L699.3 551.1 L699.5 552.7 L699.4 554.4 L698.9 556.1 L698.2 557.9 L697.7 559.6 L697.7 561.3 L698.4 563.0 L699.4 564.4 L700.5 565.9 L701.6 567.4 L702.2 569.0 L702.3 570.6 L701.7 572.2 L700.9 573.7 L700.0 575.3 L699.4 576.8 L699.1 578.4 L698.9 579.9 L698.7 581.3 L698.3 582.7 L697.6 583.9 L696.3 585.2 L694.9 586.4 L693.7 587.8 L693.2 589.5 L693.1 591.5 L693.2 593.7 L693.0 595.7 L692.5 597.2 L691.6 598.3 L690.6 599.0 L689.7 599.5 M611.6 586.9 L611.3 587.8 L610.8 588.8 L610.3 590.0 L609.7 591.2 L609.5 592.6 L609.7 594.0 L610.4 595.4 L611.6 597.0 L612.8 598.5 L613.8 600.1 L614.1 601.8 L613.8 603.6 L613.3 605.4 L612.8 607.2 L612.6 609.0 L612.8 610.8 L613.0 612.4 L613.0 614.1 L612.7 615.8 L612.1 617.4 L611.6 619.0 L611.3 620.5 L611.5 622.4 L612.5 624.0 L614.1 625.4 L615.9 626.7 L617.5 627.9 L618.5 629.2 L619.1 630.7 L619.2 632.3 L619.3 634.0 L619.5 635.5 L619.9 637.0 L620.5 638.3 L621.1 639.7 L621.6 641.1 L621.8 642.5 L621.6 644.0 L621.0 645.9 L620.4 647.7 L620.3 649.5 L620.9 651.2 L622.0 653.0 L623.2 654.8 L624.0 656.4 L624.3 657.9 L624.0 659.3 L623.6 660.7 L623.2 662.0 L623.1 663.4 L623.6 665.0 L624.5 666.2 L625.7 667.1 L627.1 667.9 L628.4 668.8 L629.7 669.9 L631.0 671.2 L632.2 672.5 L633.7 673.4 L635.1 673.7 L636.7 673.6 L638.5 673.3 L640.4 672.9 L642.2 672.8 L643.8 673.1 L645.1 674.0 L646.3 675.2 L647.4 676.6 L648.6 677.7 L650.1 678.6 L651.6 679.1 L653.2 679.6 L654.6 680.2 L655.9 681.1 L657.2 682.2 L658.5 683.4 L660.0 684.3 L661.6 684.7 L663.4 684.4 L665.4 683.9 L667.3 683.4 L669.0 683.2 L670.5 683.7 L671.8 684.7 L673.0 685.9 L674.1 687.2 L675.5 688.6 L677.1 689.5 L678.8 690.1 L680.6 690.6 L682.2 691.4 L683.6 692.4 L684.9 693.4 L686.1 694.2 L687.3 694.6 L688.5 694.8 L689.4 694.7 M790.9 542.2 L791.6 543.2 L792.5 544.4 L793.6 545.4 L795.1 546.1 L796.9 546.1 L798.9 545.8 L800.9 545.5 L802.8 545.7 L804.5 546.3 L806.1 547.0 L807.6 547.6 L809.0 548.0 L811.1 548.2 L813.1 548.6 L814.8 549.5 L816.0 550.8 L817.0 552.5 L817.9 554.1 L819.1 555.5 L820.7 556.3 L822.7 556.3 L824.6 555.3 L826.1 553.9 L827.2 552.4 L828.0 551.1 L828.8 550.1 L829.3 549.4 L829.7 548.3 L830.0 546.8 L829.9 545.1 L829.7 543.3 L829.7 541.3 L830.4 539.4 L832.0 538.1 L833.7 537.7 L835.6 537.9 L837.6 538.3 L839.5 538.4 L841.1 537.8 L842.5 536.5 L843.8 535.0 L844.9 533.8 L846.0 533.0 L846.8 532.5 M834.3 483.4 L835.2 484.2 L835.9 485.6 L836.0 487.5 L835.7 489.7 L835.5 492.1 L835.8 494.1 L836.8 495.7 L838.1 496.9 L840.2 498.0 L842.2 498.8 L844.1 499.5 L845.6 500.0 L846.7 500.2 M592.9 500.2 L593.9 500.5 L595.0 501.0 L596.4 501.8 L597.8 503.1 L599.3 504.5 L601.0 505.5 L603.0 505.6 L605.1 505.0 L607.2 504.1 L608.8 503.3 L610.0 502.8 L610.4 502.7 L611.2 502.5 L612.2 501.9 L613.3 500.5 L613.9 498.7 L614.0 497.1 L614.0 496.0"/>
</g>
<g fill="none" stroke="#c98bd3" stroke-width="2.6" stroke-dasharray="5 2 2 2">
  <polyline points="593,622.3 611,621.4 632,620 647,622.3 648.5,632 653,636.4 663.5,638.5 660.5,644 648.5,647 645.5,656 647,666.4 653,674 659,683 662,693"/>
  <polyline points="632,686 641,693"/>
</g>
<g fill="none" stroke-linejoin="round">
  <polyline stroke="#ecbd7a" stroke-width="3" points="593,682.4 629,667.4 656,648 671,639 689,612 731,585 752,588 776,579 807,562.5 818,579 830,577.5 847,571.5"/>
  <polyline stroke="#ecbd7a" stroke-width="3" points="818,579 827,609 819,645 836,654 845,693"/>
  <polyline stroke="#f3cb8c" stroke-width="1.6" points="593,682.4 629,667.4 656,648 671,639 689,612 731,585 752,588 776,579 807,562.5 818,579 830,577.5 847,571.5"/>
  <polyline stroke="#f3cb8c" stroke-width="1.6" points="818,579 827,609 819,645 836,654 845,693"/>
  <polyline stroke="#f3c9b8" stroke-width="4.5" points="593.5,13.2 631.6,18 666.9,29.4 723,13.9 813.4,32.9 825.5,52 839.4,63.4 847,65" opacity="0.6"/>
  <polyline stroke="#e8917c" stroke-width="2.8" points="593.5,13.2 631.6,18 666.9,29.4 723,13.9 813.4,32.9 825.5,52 839.4,63.4 847,65"/>
</g>
<g font-family="Liberation Sans" font-size="10.5" fill="#7a3040" text-anchor="middle" stroke="#f4ece6" stroke-width="2" paint-order="stroke" letter-spacing="0">
  <text x="638" y="22">52</text><text x="724" y="17">51</text>
</g>
<g fill="#b9794a">
<path d="M729.5 525.6L733.5 533.3H725.5Z"/>
<path d="M721.5 548.4L725.5 556.1H717.5Z"/>
<path d="M609.3 583.5L613.3 591.2H605.3Z"/>
<path d="M738.0 585.0L742.0 592.7H734.0Z"/>
<path d="M761.8 594.0L765.8 601.7H757.8Z"/>
<path d="M776.9 604.5L780.9 612.2H772.9Z"/>
<path d="M720.4 600.0L724.4 607.7H716.4Z"/>
<path d="M795.0 616.8L799.0 624.5H791.0Z"/>
<path d="M770.6 623.0L774.6 630.7H766.6Z"/>
<path d="M745.3 632.6L749.3 640.3H741.3Z"/>
<path d="M771.3 637.0L775.3 644.7H767.3Z"/>
<path d="M720.4 637.8L724.4 645.5H716.4Z"/>
<path d="M695.2 643.5L699.2 651.2H691.2Z"/>
<path d="M777.0 649.0L781.0 656.7H773.0Z"/>
<path d="M720.4 648.4L724.4 656.1H716.4Z"/>
<path d="M793.4 659.6L797.4 667.3H789.4Z"/>
<path d="M735.5 668.7L739.5 676.4H731.5Z"/>
<path d="M779.3 678.2L783.3 685.9H775.3Z"/>
<path d="M593.5 683.4L597.5 691.1H589.5Z"/>
<path d="M842.9 -0.3L847.9 8.2H837.9Z"/>
</g>
</g>
<polygon points="734.5,159.5 790.5,298.5 784.5,561.5 667.5,411.5" fill="#f5a623" stroke="#8e9499" stroke-width="2"/>
<path d="M668 159V561H790.7V159Z" fill="none" stroke="#666" stroke-width="2" stroke-dasharray="6 6"/>
<path stroke="#000" stroke-width="1.1" d="M726.5 159.5H742.5M734.5 151.5V167.5M782.5 298.5H798.5M790.5 290.5V306.5M776.5 561.5H792.5M784.5 553.5V569.5M659.5 411.5H675.5M667.5 403.5V419.5"/>
<rect x="593" y="0" width="3" height="693" fill="#888" opacity="0.06"/>
</svg>
</body></html>
